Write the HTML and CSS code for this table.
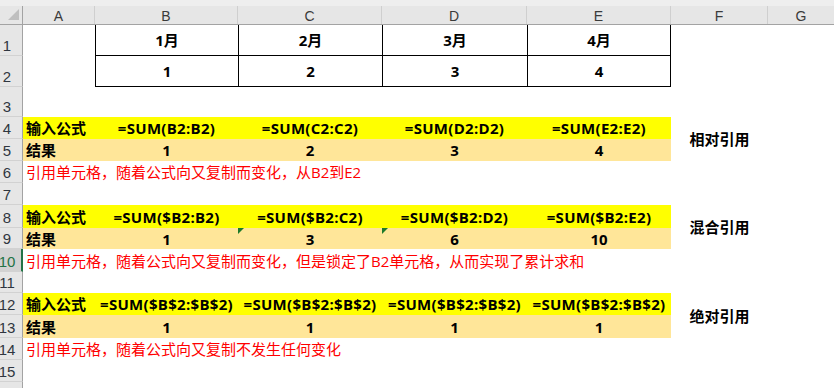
FILE: index.html
```html
<!DOCTYPE html>
<html lang="zh-CN">
<head>
<meta charset="utf-8">
<title>相对引用 混合引用 绝对引用</title>
<link rel="stylesheet" href="styles.css">
</head>
<body>
<div class="sheet">
  <!-- column headers -->
  <div class="ch corner"><div class="chi"><svg class="tri" width="12" height="12" viewBox="0 0 12 12"><polygon points="11,0 11,11 0,11" fill="#bfbfbf"/></svg></div></div>
  <div class="ch"><div class="chi">A</div></div>
  <div class="ch"><div class="chi">B</div></div>
  <div class="ch"><div class="chi">C</div></div>
  <div class="ch"><div class="chi">D</div></div>
  <div class="ch"><div class="chi">E</div></div>
  <div class="ch"><div class="chi">F</div></div>
  <div class="ch"><div class="chi last">G</div></div>

  <!-- row 1 -->
  <div class="rh">1</div>
  <div class="c"></div>
  <div class="c tb ctr b">1月</div>
  <div class="c tb ctr b">2月</div>
  <div class="c tb ctr b">3月</div>
  <div class="c tb tbr ctr b">4月</div>
  <div class="c rest2"></div>

  <!-- row 2 -->
  <div class="rh">2</div>
  <div class="c"></div>
  <div class="c tb ctr b">1</div>
  <div class="c tb ctr b">2</div>
  <div class="c tb ctr b">3</div>
  <div class="c tb tbr ctr b">4</div>
  <div class="c rest2"></div>

  <!-- row 3 -->
  <div class="rh">3</div>
  <div class="c full"></div>

  <!-- row 4 -->
  <div class="rh">4</div>
  <div class="c y b lft">输入公式</div>
  <div class="c y b ctr f">=SUM(B2:B2)</div>
  <div class="c y b ctr f">=SUM(C2:C2)</div>
  <div class="c y b ctr f">=SUM(D2:D2)</div>
  <div class="c y b ctr f">=SUM(E2:E2)</div>
  <div class="c b ctr merge">相对引用</div>
  <div class="c"></div>

  <!-- row 5 -->
  <div class="rh">5</div>
  <div class="c t b lft">结果</div>
  <div class="c t b ctr">1</div>
  <div class="c t b ctr">2</div>
  <div class="c t b ctr">3</div>
  <div class="c t b ctr">4</div>
  <div class="c"></div>

  <!-- row 6 -->
  <div class="rh">6</div>
  <div class="c full red lft">引用单元格，随着公式向又复制而变化，从B2到E2</div>

  <!-- row 7 -->
  <div class="rh">7</div>
  <div class="c full"></div>

  <!-- row 8 -->
  <div class="rh">8</div>
  <div class="c y b lft">输入公式</div>
  <div class="c y b ctr f">=SUM($B2:B2)</div>
  <div class="c y b ctr f">=SUM($B2:C2)</div>
  <div class="c y b ctr f">=SUM($B2:D2)</div>
  <div class="c y b ctr f">=SUM($B2:E2)</div>
  <div class="c b ctr merge">混合引用</div>
  <div class="c"></div>

  <!-- row 9 -->
  <div class="rh">9</div>
  <div class="c t b lft">结果</div>
  <div class="c t b ctr">1</div>
  <div class="c t b ctr err">3</div>
  <div class="c t b ctr err">6</div>
  <div class="c t b ctr">10</div>
  <div class="c"></div>

  <!-- row 10 -->
  <div class="rh sel">10</div>
  <div class="c full red lft">引用单元格，随着公式向又复制而变化，但是锁定了B2单元格，从而实现了累计求和</div>

  <!-- row 11 -->
  <div class="rh">11</div>
  <div class="c full"></div>

  <!-- row 12 -->
  <div class="rh">12</div>
  <div class="c y b lft">输入公式</div>
  <div class="c y b ctr f">=SUM($B$2:$B$2)</div>
  <div class="c y b ctr f">=SUM($B$2:$B$2)</div>
  <div class="c y b ctr f">=SUM($B$2:$B$2)</div>
  <div class="c y b ctr f">=SUM($B$2:$B$2)</div>
  <div class="c b ctr merge">绝对引用</div>
  <div class="c"></div>

  <!-- row 13 -->
  <div class="rh">13</div>
  <div class="c t b lft">结果</div>
  <div class="c t b ctr">1</div>
  <div class="c t b ctr">1</div>
  <div class="c t b ctr">1</div>
  <div class="c t b ctr">1</div>
  <div class="c"></div>

  <!-- row 14 -->
  <div class="rh">14</div>
  <div class="c full red lft">引用单元格，随着公式向又复制不发生任何变化</div>

  <!-- row 15 -->
  <div class="rh">15</div>
  <div class="c full"></div>

  <!-- row 16 (partially visible, number hidden below the edge) -->
  <div class="rh"></div>
  <div class="c full"></div>
</div>
</body>
</html>
```

FILE: styles.css
```css
html, body {
  margin: 0;
  padding: 0;
  background: #ffffff;
}

body {
  width: 834px;
  height: 388px;
  overflow: hidden;
  font-family: "Open Sans", "Noto Sans CJK SC", sans-serif;
  font-size: 15px;
  color: #000;
}

.sheet {
  display: grid;
  grid-template-columns: 23px 72px 143px 144px 145px 144px 97px 66px;
  grid-template-rows: 25px 31px 31px 30px 22px 22px 22px 22px 23px 21px 23px 21px 22px 23px 22px 22px 22px;
}

/* column headers */
.ch {
  background: #eeeeee;
  border-bottom: 1px solid #a3a3a3;
  padding-top: 6px;
  box-sizing: border-box;
}
.chi {
  height: 18px;
  background: #e6e6e6;
  border-right: 1px solid #cfcfcf;
  box-sizing: border-box;
  display: flex;
  align-items: flex-end;
  justify-content: center;
  font-family: "Liberation Sans", "DejaVu Sans", sans-serif;
  font-size: 14px;
  line-height: 16px;
  color: #3a3a3a;
}
.chi.last {
  border-right: none;
}
.corner .chi {
  border-right: 1px solid #a3a3a3;
  justify-content: flex-start;
  align-items: flex-start;
}
.tri {
  display: block;
  margin: 3px 0 0 8px;
}

/* row headers */
.rh {
  background: #e6e6e6;
  border-right: 1px solid #a3a3a3;
  border-bottom: 1px solid #d2d2d2;
  box-sizing: border-box;
  display: flex;
  align-items: flex-end;
  justify-content: center;
  padding: 0 8px 1px 0;
  font-family: "Liberation Sans", "DejaVu Sans", sans-serif;
  font-size: 15px;
  line-height: 17px;
  color: #2f3640;
  white-space: nowrap;
}
.rh.sel {
  background: #d2d2d2;
  color: #217346;
  border-right: 2px solid #217346;
  padding-right: 7px;
}

/* cells */
.c {
  box-sizing: border-box;
  display: flex;
  align-items: center;
  white-space: nowrap;
  min-width: 0;
  line-height: 20px;
}
.ctr {
  justify-content: center;
}
.lft {
  justify-content: flex-start;
  padding-left: 3px;
}
.b {
  font-weight: 700;
}
.f {
  letter-spacing: 0.3px;
}
.y {
  background: #ffff00;
}
.t {
  background: #ffe699;
}
.red {
  color: #ff0000;
}
.full {
  grid-column: 2 / -1;
}
.rest2 {
  grid-column: 7 / -1;
}
.merge {
  grid-row: span 2;
}

/* bordered table B1:E2 */
.tb {
  border-left: 1px solid #000;
  border-bottom: 1px solid #000;
}
.tbr {
  border-right: 1px solid #000;
}

/* green error indicator */
.err {
  position: relative;
}
.err::before {
  content: "";
  position: absolute;
  top: 0;
  left: 0;
  width: 0;
  height: 0;
  border-top: 6px solid #1d7a2a;
  border-right: 6px solid transparent;
}
```
